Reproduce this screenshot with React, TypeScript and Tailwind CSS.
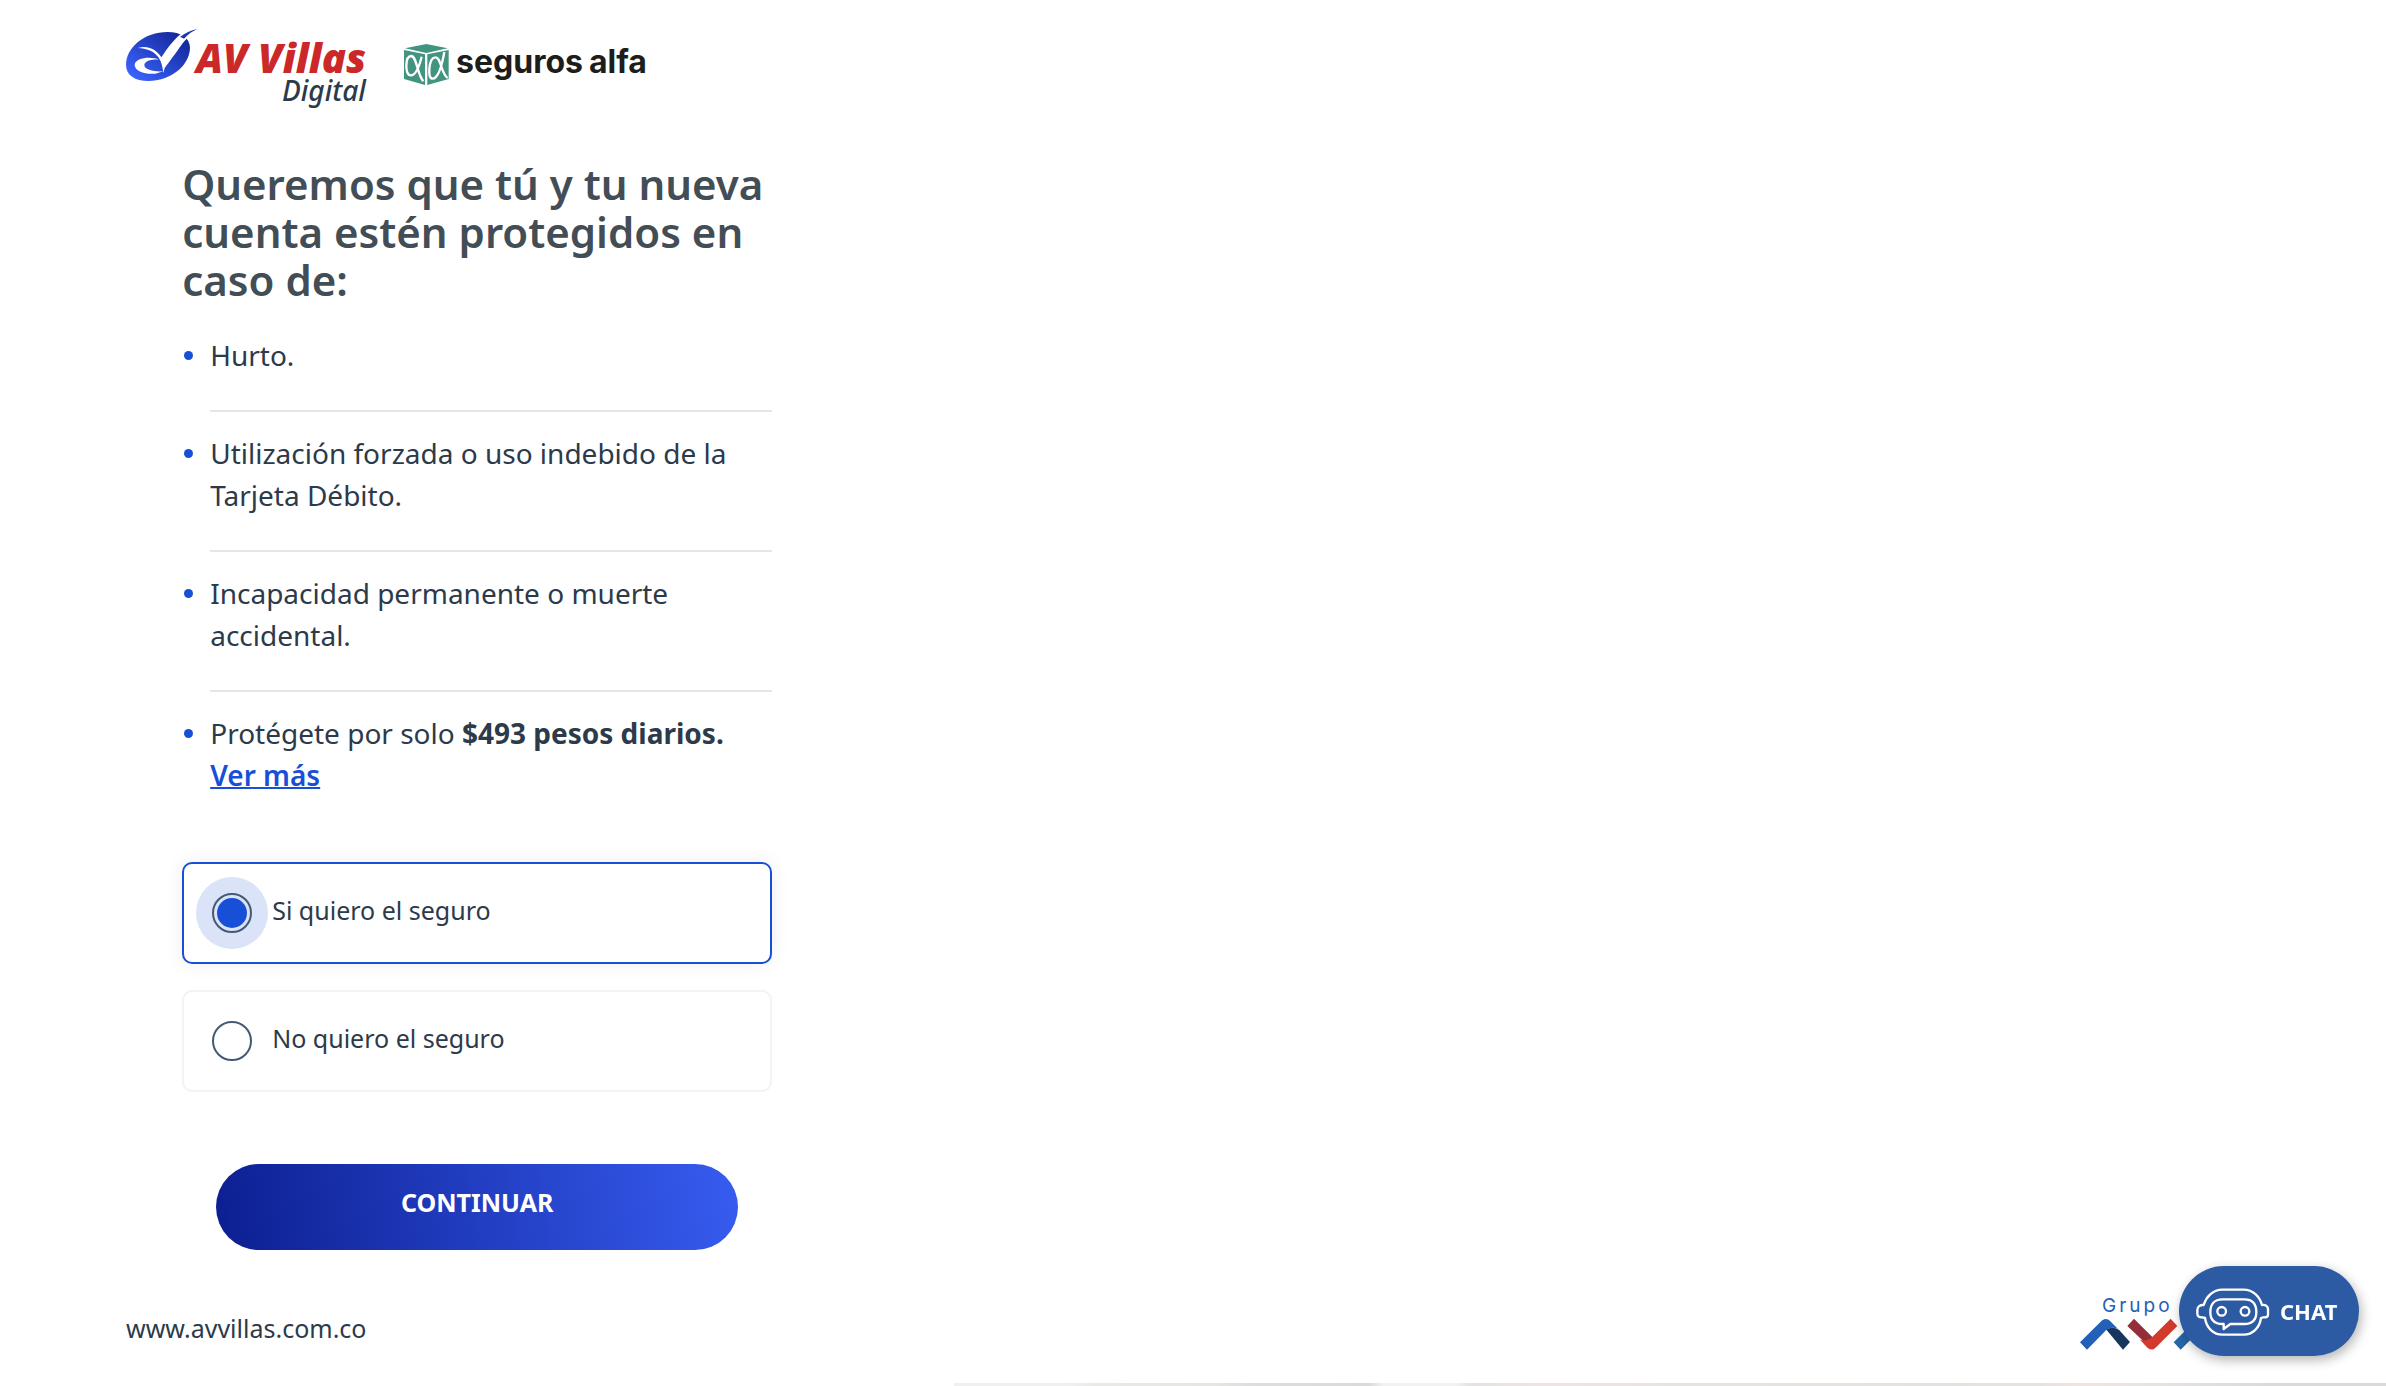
import { useState } from "react";

const benefits = [
  "Hurto.",
  "Utilización forzada o uso indebido de la Tarjeta Débito.",
  "Incapacidad permanente o muerte accidental.",
];

const options = [
  { id: "si", label: "Si quiero el seguro" },
  { id: "no", label: "No quiero el seguro" },
];

function AvVillasLogo() {
  return (
    <svg viewBox="0 0 250 88" className="h-[88px] w-[250px] overflow-visible" role="img" aria-label="AV Villas Digital">
      <defs>
        <linearGradient id="avMark" x1="0" y1="1" x2="1" y2="0">
          <stop offset="0.1" stopColor="#3a62fb" />
          <stop offset="0.9" stopColor="#14279b" />
        </linearGradient>
      </defs>
      <g transform="translate(-4 0) scale(0.3333)">
        <path
          d="M18 122C18 70 74 24 142 24C183 24 210 42 210 72C208 128 148 171 86 171C44 171 18 153 18 122Z"
          fill="url(#avMark)"
        />
        <path
          d="M54 72C82 64 106 74 124 100C140 76 158 50 180 32L206 18L214 32C202 42 196 48 188 58C164 92 146 116 134 132L130 147C128 124 122 108 112 96C98 80 80 74 54 72Z"
          fill="#fff"
        />
        <path d="M180 39C196 27 212 19 232 15C216 22 204 31 192 44C189 42 185 40 180 39Z" fill="#1c35ae" />
        <path d="M118 107C94 96 46 100 44 122C44 142 76 152 106 149L130 142C104 144 74 138 73 124C73 111 94 106 118 107Z" fill="#fff" />
      </g>
      <text x="72" y="49" className="fill-[#cb2829] font-['Open_Sans'] text-[40px] font-extrabold italic">
        AV Villas
      </text>
      <text x="158" y="77" className="fill-[#2c3a4a] font-['Noto_Sans'] text-[28px] font-medium italic">
        Digital
      </text>
    </svg>
  );
}

function SegurosAlfaLogo() {
  return (
    <svg viewBox="0 0 256 60" className="h-[60px] w-[256px]" role="img" aria-label="seguros alfa">
      <g transform="translate(-7) scale(0.3333)">
        <path d="M94 42L158 55L94 69L30 55Z" fill="#429380" />
        <path d="M27 60L90 73V165L27 147Z" fill="#429380" />
        <path d="M161 60L97 73V165L161 147Z" fill="#429380" />
        <g fill="none" stroke="#fff" strokeWidth="7">
          <path d="M80 80C72 112 63 134 49 136C38 137 34 124 34 108C34 91 39 78 49 78C65 79 66 132 85 154" />
          <path d="M148 66C142 100 132 143 114 146C104 147 102 134 103 118C104 99 110 83 121 82C138 80 138 132 158 144" />
        </g>
      </g>
      <g className="fill-[#1d1d1b] font-['Inter'] text-[32px] font-bold">
        <text x="54" y="43">seguros</text>
        <text x="187" y="43">alfa</text>
      </g>
    </svg>
  );
}

function GrupoAvalLogo() {
  return (
    <svg viewBox="0 0 180 56" className="h-14 w-[180px] overflow-visible" role="img" aria-label="Grupo Aval">
      <text x="22" y="16" className="fill-[#2360b8] font-['Inter'] text-[19px] tracking-[3px]">
        Grupo
      </text>
      <g transform="translate(-20 -46) scale(0.3333)">
        <path d="M138 238C154 230 168 232 178 241L210 276L189 299Z" fill="#17365f" />
        <path d="M60 277L122 215C132 205 142 205 151 214L174 237C160 231 148 232 138 241L81 299Z" fill="#2360b8" />
        <path d="M222 206L202 228L252 275L280 264Z" fill="#942f3a" />
        <path d="M332 206L352 228L289 291C280 301 270 301 261 292L240 269C254 274 268 270 276 262Z" fill="#d23a2c" />
        <path d="M341 277L403 215C413 205 423 205 432 214L494 277L473 299L418 243L362 299Z" fill="#2767a8" />
      </g>
    </svg>
  );
}

function RobotIcon() {
  return (
    <svg viewBox="0 0 225 153" className="h-[51px] w-[75px]" fill="none" stroke="#fff" strokeWidth="7" strokeLinejoin="round" aria-hidden="true">
      <path d="M82 11H146C174 11 194 32 201 57C212 55 219 62 219 69V86C219 92 214 95 205 94L198 96C194 126 172 146 146 146H82C56 146 34 126 30 96L22 94C14 95 7 92 7 83V72C7 62 15 56 26 57C34 32 54 11 82 11Z" />
      <path d="M82 40H148C174 40 184 56 184 78C184 101 172 114 148 114H106L86 129V114H82C58 114 46 101 46 78C46 55 58 40 82 40Z" />
      <circle cx="80" cy="76" r="13" />
      <circle cx="150" cy="76" r="13" />
    </svg>
  );
}

export default function App() {
  const [choice, setChoice] = useState("si");

  return (
    <div className="flex min-h-screen flex-col bg-white font-['Noto_Sans',sans-serif] text-[#2c3a4a]">
      <header className="flex items-start gap-7 pt-6 pl-[124px]">
        <AvVillasLogo />
        <div className="pt-1.5">
          <SegurosAlfaLogo />
        </div>
      </header>

      <main className="flex w-2/5 justify-center pt-12">
        <div className="w-full max-w-[590px]">
          <h1 className="text-[42px] leading-[48px] font-semibold text-[#434d56]">
            Queremos que tú y tu nueva cuenta estén protegidos en caso de:
          </h1>

          <ul className="mt-[30px] text-[28px] leading-[42px]">
            {benefits.map((b) => (
              <li key={b} className="flex gap-[17px] pb-5 pl-0.5">
                <span className="mt-[17px] size-[9px] shrink-0 rounded-full bg-[#184fd7]" />
                <p className="flex-1 border-b-2 border-[#e6e6e6] pb-[34px]">{b}</p>
              </li>
            ))}
            <li className="flex gap-[17px] pl-0.5">
              <span className="mt-[17px] size-[9px] shrink-0 rounded-full bg-[#184fd7]" />
              <p className="flex-1">
                Protégete por solo <strong className="font-bold">$493 pesos diarios.</strong>{" "}
                <a href="#ver-mas" className="font-semibold text-[#184fd7] underline decoration-2">
                  Ver más
                </a>
              </p>
            </li>
          </ul>

          <form onSubmit={(e) => e.preventDefault()}>
            <fieldset className="mt-[66px] flex flex-col gap-[26px]">
              {options.map((o) => (
                <label
                  key={o.id}
                  htmlFor={o.id}
                  className="flex h-[102px] items-center gap-5 rounded-[10px] border-2 border-[#f2f2f7] pl-7 text-[25px] leading-8 has-checked:border-[#184fd7] has-checked:shadow-[0_0_20px_rgba(0,0,0,0.07)]"
                >
                  <input
                    id={o.id}
                    type="radio"
                    name="seguro"
                    checked={choice === o.id}
                    onChange={() => setChoice(o.id)}
                    className="grid size-10 shrink-0 appearance-none place-items-center rounded-full border-2 border-[#455a74] before:size-[30px] before:rounded-full checked:bg-[#dae3f8] checked:shadow-[0_0_0_16px_#dae3f8] checked:before:bg-[#184fd7] checked:before:content-['']"
                  />
                  <span className="pb-1.5">{o.label}</span>
                </label>
              ))}
            </fieldset>
            <div className="mt-[72px] flex justify-center">
              <button
                type="submit"
                className="h-[86px] w-[522px] rounded-full bg-[linear-gradient(80deg,#0c1f91,#375cf0)] pb-2 text-[25px] font-bold text-white"
              >
                CONTINUAR
              </button>
            </div>
          </form>
        </div>
      </main>

      <footer className="mt-auto flex items-end justify-between px-[126px] pb-[31px]">
        <a href="#inicio" className="mb-2 text-[25px] leading-8">
          www.avvillas.com.co
        </a>
        <GrupoAvalLogo />
      </footer>

      <div className="ml-[40%] h-[3px] bg-[linear-gradient(90deg,#f0f0f0_0%,#f0f0f0_8%,#eae9e5_10%,#e8e6e3_18%,#dddddd_21%,#dadada_29%,#f2f2f2_30%,#f2f2f2_35%,#e4e3e2_36%,#f0e4e2_41%,#e6e3e1_52%,#e4e2e0_70%,#e8e2df_76%,#f1e4e0_79%,#e6e3e1_84%,#dadada_92%,#dadada_100%)]" />

      <button
        type="button"
        className="fixed right-[27px] bottom-[30px] flex h-[90px] w-[180px] items-center gap-2.5 rounded-full bg-[#2c5ba4] pl-4 text-[22px] font-bold text-white shadow-[2px_4px_12px_rgba(0,0,0,0.3)]"
      >
        <RobotIcon />
        CHAT
      </button>
    </div>
  );
}
